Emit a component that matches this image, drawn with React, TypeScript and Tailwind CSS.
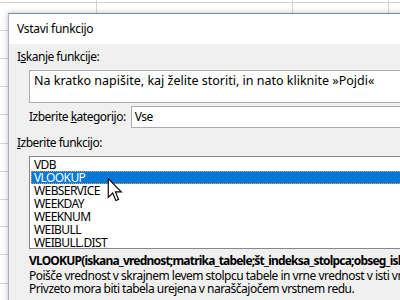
import React from 'react'

const functions = ['VDB', 'VLOOKUP', 'WEBSERVICE', 'WEEKDAY', 'WEEKNUM', 'WEIBULL', 'WEIBULL.DIST']
const rowLines = [3, 28, 28, 28, 28, 29, 28, 28, 27, 28, 29]

function Cursor() {
  return (
    <svg className="absolute left-[107px] top-[178px]" width="16" height="24" viewBox="0 0 12.5 20.5">
      <path
        d="M0.5 0.5 L0.5 16.5 L4.3 12.8 L7 19.3 L9.3 18.3 L6.6 11.9 L11.6 11.9 Z"
        fill="#fff"
        stroke="#000"
        strokeWidth="1"
        strokeLinejoin="miter"
      />
    </svg>
  )
}

function Sheet() {
  return (
    <div className="absolute inset-0 flex flex-col">
      {rowLines.map((h, i) => (
        <div key={i} className="flex shrink-0 border-b border-[#d4d4d4]" style={{ height: h }}>
          <div className="w-[97px] border-r border-[#d4d4d4]" />
          <div className="w-[196px] border-r border-[#d4d4d4]" />
          <div className="w-[96px] border-r border-[#d4d4d4]" />
        </div>
      ))}
    </div>
  )
}

export default function App() {
  return (
    <div className="relative w-[400px] h-[300px] overflow-hidden bg-white font-['Noto_Sans',sans-serif] text-[12px] tracking-[-0.5px] text-black">
      <Sheet />
      <div className="absolute left-[8px] top-[13px] w-[420px] h-[320px] flex flex-col border-l border-t border-l-[#a7b1bb] border-t-[#7a8fa6] shadow-[0_0_6px_rgba(0,0,0,0.25)]">
        <div className="h-[30px] shrink-0 bg-white pl-[8px] flex items-center">
          <span className="text-[12px] tracking-[-0.3px]">Vstavi funkcijo</span>
        </div>
        <div className="flex-1 bg-[#f0f0f0] pl-[8px] flex flex-col">
          <div className="mt-[5px] h-[16px] leading-[16px]">
            I<span className="underline">s</span>kanje funkcije:
          </div>
          <div className="mt-[5px] ml-[12px] h-[33px] bg-white border border-[#abadb3] px-[4px] pt-[2px] leading-[16px] text-[12.5px] tracking-normal">
            Na kratko napišite, kaj želite storiti, in nato kliknite »Pojdi«
          </div>
          <div className="mt-[3px] ml-[12px] flex items-center gap-[5px]">
            <span className="leading-[16px]">
              Izberite <span className="underline">k</span>ategorijo:
            </span>
            <div className="flex-1 h-[22px] bg-white border border-[#abadb3] px-[3px] flex items-center">Vse</div>
          </div>
          <div className="mt-[7px] h-[16px] leading-[16px]">
            <span className="underline">I</span>zberite funkcijo:
          </div>
          <div className="mt-[5px] ml-[12px] h-[93px] bg-white border border-[#828790] pt-[1px] px-[1px] tracking-[-0.6px]">
            {functions.map((f) =>
              f === 'VLOOKUP' ? (
                <div key={f} className="h-[13px] leading-[11px] bg-[#0078d7] text-white border border-dotted border-[#f0a050] pl-[2px]">
                  {f}
                </div>
              ) : (
                <div key={f} className="h-[13px] leading-[13px] pl-[3px]">
                  {f}
                </div>
              )
            )}
          </div>
          <div className="mt-[4px] ml-[12px] h-[16px] leading-[16px] font-bold whitespace-nowrap tracking-[-0.8px]">
            VLOOKUP(iskana_vrednost;matrika_tabele;št_indeksa_stolpca;obseg_iskanja)
          </div>
          <div className="ml-[12px] leading-[13px] whitespace-nowrap tracking-[-0.5px]">
            <div>Poišče vrednost v skrajnem levem stolpcu tabele in vrne vrednost v isti vrstici iz stolpca, ki ga določite.</div>
            <div>Privzeto mora biti tabela urejena v naraščajočem vrstnem redu.</div>
          </div>
        </div>
      </div>
      <Cursor />
    </div>
  )
}
